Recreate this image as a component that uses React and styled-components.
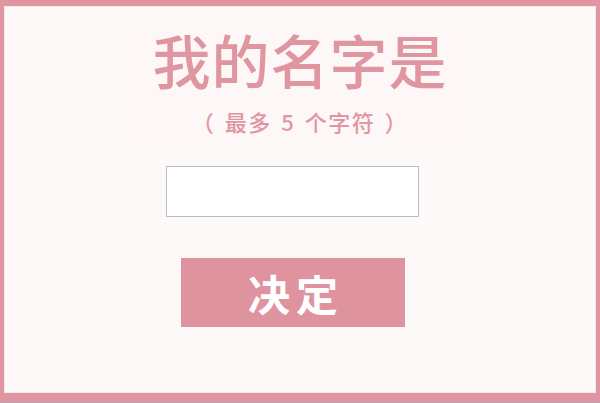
import React from "react";
import styled, { createGlobalStyle } from "styled-components";

const Global = createGlobalStyle`
  html, body { margin: 0; padding: 0; width: 600px; height: 403px; overflow: hidden; }
  body { font-family: "Noto Sans CJK SC", "Noto Sans", sans-serif; }
`;

const Frame = styled.div`
  box-sizing: border-box;
  width: 600px;
  height: 403px;
  background: #e096a1;
  padding: 6px 4px 9px 4px;
  border-bottom: 1px solid #b9a3a6;
`;

const Inner = styled.div`
  box-sizing: border-box;
  height: 100%;
  background: #fef9f9;
  border: 1px solid #fbe6e9;
  display: flex;
  flex-direction: column;
  align-items: center;
`;

const Heading = styled.div`
  display: flex;
  flex-direction: column;
  align-items: center;
  width: 356px;
  margin-top: 17px;
  padding: 0 0 22px;
  background: #fdf7f7;
  color: #e096a1;
`;

const Title = styled.h1`
  margin: 0;
  font-size: 58px;
  font-weight: 500;
  line-height: 70px;
  letter-spacing: 1px;
`;

const Sub = styled.div`
  font-size: 22px;
  font-weight: 500;
  line-height: 30px;
  margin-top: 12px;
  letter-spacing: 1.5px;
  word-spacing: 3px;
`;

const NameInput = styled.input`
  box-sizing: border-box;
  width: 253px;
  height: 51px;
  margin-top: 8px;
  margin-left: -16px;
  border: 1px solid #bdbdbd;
  background: #fff;
  outline: none;
`;

const Submit = styled.button`
  box-sizing: border-box;
  width: 224px;
  height: 69px;
  margin-top: 41px;
  margin-left: -14px;
  border: none;
  background: #df939f;
  color: #fff;
  font-family: "Noto Sans CJK JP", "Noto Sans CJK SC", sans-serif;
  font-size: 42px;
  font-weight: 700;
  letter-spacing: 6px;
  padding: 0 0 0 6px;
  line-height: 1;
`;

export default function App() {
  return (
    <>
      <Global />
      <Frame>
        <Inner>
          <Heading>
            <Title>我的名字是</Title>
            <Sub>（ 最多 5 个字符 ）</Sub>
          </Heading>
          <NameInput type="text" />
          <Submit>决定</Submit>
        </Inner>
      </Frame>
    </>
  );
}
